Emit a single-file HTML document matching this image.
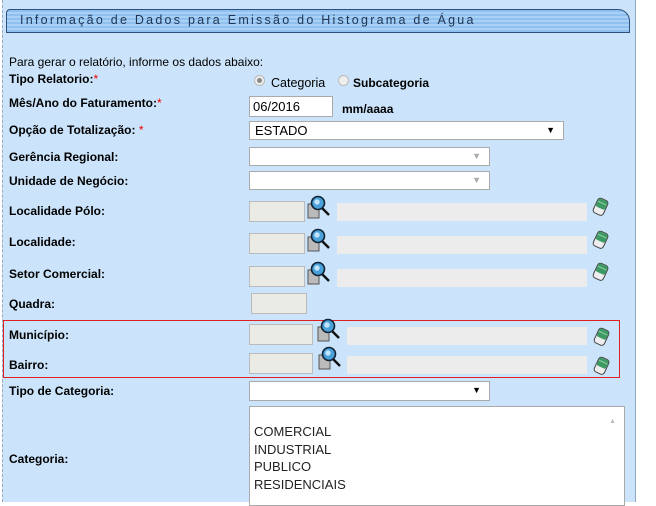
<!DOCTYPE html>
<html><head><meta charset="utf-8"><style>
*{margin:0;padding:0;box-sizing:border-box}
body{width:656px;height:502px;background:#fff;position:relative;overflow:hidden;font-family:"Liberation Sans",Arial,sans-serif;font-size:12px;color:#000}
.panel{position:absolute;left:2px;top:0;width:634px;height:502px;background:#cbe4fb;border-left:1px dashed #9ab;border-right:1px solid #8fa6bb}
.a{position:absolute}
.title{left:6px;top:9px;width:624px;height:24px;border:1px solid #2c4f7c;border-radius:4px 12px 0 0;background:repeating-linear-gradient(#8fc0ef 0,#8fc0ef 2px,#a9d0f5 2px,#a9d0f5 4px);font-size:12.5px;letter-spacing:2.25px;color:#1f3553;padding:3px 0 0 13px}
.l{font-weight:bold;font-size:12px}
.r{color:#e00;font-weight:normal}
.in{background:#fff;border:1px solid #aaa}
.g{background:#ebebe6;border:1px solid #bbb}
.lg{background:#ececec}
.sel{background:#fff;border:1px solid #aaa;font-size:13px;padding:1px 5px}
.arr{position:absolute;right:8px;top:3px;font-size:9px}
.rad{width:11px;height:11px;border-radius:50%;border:1px solid #bbb;background:#eee}
</style></head><body>
<div class="panel"></div>
<div class="a title">Informação de Dados para Emissão do Histograma de Água</div>
<div class="a" style="left:9px;top:55px">Para gerar o relatório, informe os dados abaixo:</div>
<div class="a l" style="left:9px;top:72px">Tipo Relatorio:<span class="r">*</span></div>
<div class="a rad" style="left:254px;top:75px"><div style="width:5px;height:5px;border-radius:50%;background:#888;margin:2px"></div></div>
<div class="a" style="left:271px;top:76px;font-size:12.5px">Categoria</div>
<div class="a rad" style="left:338px;top:75px"></div>
<div class="a l" style="left:353px;top:76px">Subcategoria</div>
<div class="a l" style="left:9px;top:96px">Mês/Ano do Faturamento:<span class="r">*</span></div>
<div class="a in" style="left:249px;top:96px;width:84px;height:21px;font-size:13px;padding:2px 3px">06/2016</div>
<div class="a l" style="left:342px;top:102px">mm/aaaa</div>
<div class="a l" style="left:9px;top:123px">Opção de Totalização: <span class="r">*</span></div>
<div class="a sel" style="left:249px;top:121px;width:315px;height:19px">ESTADO<span class="arr">▼</span></div>
<div class="a l" style="left:9px;top:150px">Gerência Regional:</div>
<div class="a sel" style="left:249px;top:147px;width:241px;height:19px"><span class="arr" style="color:#aaa">▼</span></div>
<div class="a l" style="left:9px;top:174px">Unidade de Negócio:</div>
<div class="a sel" style="left:249px;top:171px;width:241px;height:19px"><span class="arr" style="color:#aaa">▼</span></div>

<div class="a l" style="left:9px;top:204px">Localidade Pólo:</div>
<div class="a l" style="left:9px;top:235px">Localidade:</div>
<div class="a l" style="left:9px;top:267px">Setor Comercial:</div>
<div class="a l" style="left:9px;top:297px">Quadra:</div>
<div class="a" style="left:3px;top:320px;width:617px;height:58px;border:1px solid #e02020"></div>
<div class="a l" style="left:9px;top:328px">Município:</div>
<div class="a l" style="left:9px;top:358px">Bairro:</div>
<div class="a l" style="left:9px;top:384px">Tipo de Categoria:</div>
<div class="a sel" style="left:249px;top:381px;width:241px;height:20px"><span class="arr">▼</span></div>
<div class="a l" style="left:9px;top:452px">Categoria:</div>
<div class="a" style="left:249px;top:406px;width:376px;height:100px;background:#fff;border:1px solid #aaa;font-size:13px;line-height:17.5px;padding:16px 0 0 4px;color:#222">COMERCIAL<br>INDUSTRIAL<br>PUBLICO<br>RESIDENCIAIS<div class="a" style="right:8px;top:6px;font-size:7px;color:#bbb">▲</div></div>

<div class="a g" style="left:249px;top:201px;width:56px;height:21px"></div>
<div class="a g" style="left:249px;top:233px;width:56px;height:21px"></div>
<div class="a g" style="left:249px;top:266px;width:56px;height:21px"></div>
<div class="a g" style="left:251px;top:293px;width:56px;height:21px"></div>
<div class="a g" style="left:249px;top:324px;width:64px;height:21px"></div>
<div class="a g" style="left:249px;top:353px;width:64px;height:21px"></div>
<div class="a lg" style="left:337px;top:203px;width:250px;height:18px"></div>
<div class="a lg" style="left:337px;top:236px;width:250px;height:18px"></div>
<div class="a lg" style="left:337px;top:269px;width:250px;height:18px"></div>
<div class="a lg" style="left:347px;top:327px;width:240px;height:18px"></div>
<div class="a lg" style="left:347px;top:356px;width:240px;height:18px"></div>

<svg class="a" style="left:0;top:0" width="656" height="502">
<defs>
<g id="lupa"><rect x="0" y="8" width="11" height="14" fill="#bbb" stroke="#555"/><line x1="13" y1="11" x2="21" y2="19" stroke="#111" stroke-width="2.4"/><circle cx="10" cy="7" r="6.5" fill="#4aa0d8" stroke="#123" stroke-width="1.6"/><circle cx="9" cy="6" r="2.7" fill="#bfe4fb"/></g>
<g id="er"><g transform="rotate(25 9 10)"><rect x="3" y="2" width="11" height="16" rx="3" fill="#eee" stroke="#444"/><rect x="3.5" y="2.5" width="10" height="9" rx="2" fill="#3d9a64"/><line x1="4" y1="6" x2="13" y2="6" stroke="#8fd0a5"/></g></g>
</defs>
<use href="#lupa" x="308" y="196"/><use href="#lupa" x="308" y="229"/><use href="#lupa" x="308" y="262"/>
<use href="#lupa" x="318" y="319"/><use href="#lupa" x="319" y="347"/>
<use href="#er" x="592" y="197"/><use href="#er" x="592" y="230"/><use href="#er" x="592" y="262"/>
<use href="#er" x="593" y="327"/><use href="#er" x="593" y="356"/>
</svg>
</body></html>
